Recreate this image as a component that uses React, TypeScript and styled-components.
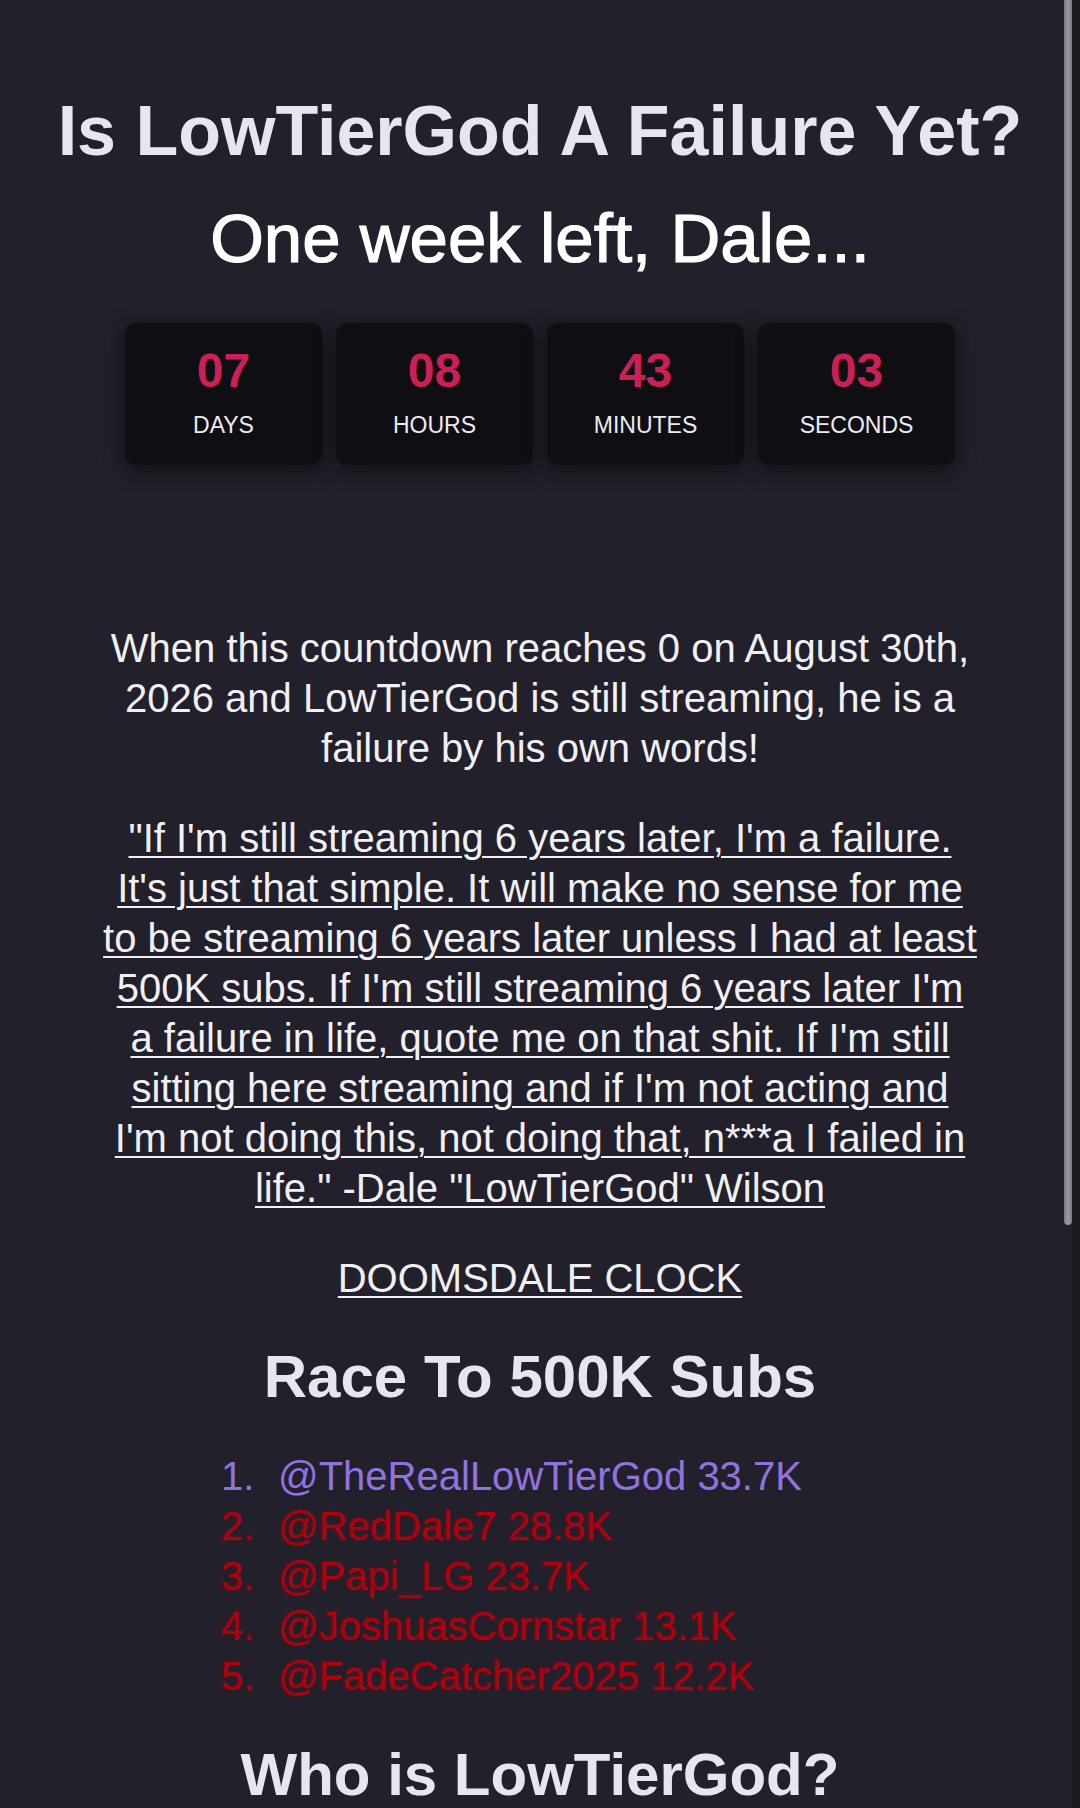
import React from 'react';
import styled, { createGlobalStyle } from 'styled-components';

const GlobalStyle = createGlobalStyle`
  html {
    scrollbar-width: none;
  }
  html::-webkit-scrollbar {
    display: none;
  }
  body {
    margin: 0;
    background: #22212b;
    font-family: "Liberation Sans", Arial, sans-serif;
  }
`;

const Page = styled.main`
  display: flex;
  flex-direction: column;
  align-items: center;
  text-align: center;
  padding-top: 89px;
  color: #f1f0f6;
`;

const Title = styled.h1`
  margin: 0;
  font-size: 70px;
  line-height: 84px;
  font-weight: 700;
  color: #e7e6ef;
`;

const Subtitle = styled.h2`
  margin: 25px 0 0;
  font-size: 69px;
  line-height: 82px;
  font-weight: 400;
  color: #ffffff;
  -webkit-text-stroke: 1.2px #ffffff;
`;

const Countdown = styled.div`
  display: flex;
  gap: 14px;
  margin-top: 43px;
`;

const TimeBox = styled.div`
  width: 197px;
  height: 142px;
  box-sizing: border-box;
  padding-top: 20px;
  background: #0f0e13;
  border-radius: 12px;
  box-shadow: 0 4px 18px 2px rgba(0, 0, 0, 0.5);
  display: flex;
  flex-direction: column;
  align-items: center;
`;

const TimeValue = styled.div`
  font-size: 48px;
  line-height: 56px;
  font-weight: 700;
  color: #cc1f55;
`;

const TimeLabel = styled.div`
  margin-top: 12px;
  font-size: 23px;
  line-height: 28px;
  color: #ecebf1;
`;

const Intro = styled.p`
  width: 900px;
  margin: 158px 0 0;
  font-size: 40px;
  line-height: 50px;
`;

const Quote = styled.a`
  display: block;
  margin-top: 40px;
  font-size: 40px;
  line-height: 50px;
  color: #f1f0f6;
  text-decoration: underline;
  text-decoration-thickness: 2px;
  text-underline-offset: 4px;
`;

const ClockLink = styled.a`
  display: block;
  margin-top: 40px;
  font-size: 40px;
  line-height: 50px;
  color: #f1f0f6;
  text-decoration: underline;
  text-decoration-thickness: 2px;
  text-underline-offset: 4px;
`;

const SectionTitle = styled.h2`
  margin: 38px 0 0;
  font-size: 60px;
  line-height: 72px;
  font-weight: 700;
  color: #e7e6ef;
`;

const Leaderboard = styled.ol`
  margin: 38px 0 0;
  padding: 0;
  list-style: none;
  text-align: left;
  counter-reset: rank;
`;

const Entry = styled.li<{ $leader?: boolean }>`
  counter-increment: rank;
  font-size: 40px;
  line-height: 50px;
  color: ${p => (p.$leader ? '#9372e0' : '#b0000e')};
  text-shadow: ${p => (p.$leader ? 'none' : '0 0 3px rgba(180, 0, 16, 0.5)')};

  &::before {
    content: counter(rank) ".";
    display: inline-block;
    width: 57px;
    margin-left: -57px;
  }
`;

const ScrollTrack = styled.div`
  position: fixed;
  top: 0;
  right: 0;
  width: 8px;
  height: 100vh;
  background: #1c1b22;
`;

const ScrollThumb = styled.div`
  position: fixed;
  top: 0;
  right: 8px;
  width: 8px;
  height: 1225px;
  border-radius: 0 0 4px 4px;
  background: linear-gradient(90deg, #77777c, #9b9ba0 50%, #77777c);
`;

const timeParts = [
  { value: '07', label: 'DAYS' },
  { value: '08', label: 'HOURS' },
  { value: '43', label: 'MINUTES' },
  { value: '03', label: 'SECONDS' },
];

const quoteLines = [
  '"If I\'m still streaming 6 years later, I\'m a failure.',
  'It\'s just that simple. It will make no sense for me',
  'to be streaming 6 years later unless I had at least',
  '500K subs. If I\'m still streaming 6 years later I\'m',
  'a failure in life, quote me on that shit. If I\'m still',
  'sitting here streaming and if I\'m not acting and',
  'I\'m not doing this, not doing that, n***a I failed in',
  'life." -Dale "LowTierGod" Wilson',
];

const racers = [
  '@TheRealLowTierGod 33.7K',
  '@RedDale7 28.8K',
  '@Papi_LG 23.7K',
  '@JoshuasCornstar 13.1K',
  '@FadeCatcher2025 12.2K',
];

const App: React.FC = () => (
  <>
    <GlobalStyle />
    <Page>
      <Title>Is LowTierGod A Failure Yet?</Title>
      <Subtitle>One week left, Dale...</Subtitle>

      <Countdown>
        {timeParts.map(part => (
          <TimeBox key={part.label}>
            <TimeValue>{part.value}</TimeValue>
            <TimeLabel>{part.label}</TimeLabel>
          </TimeBox>
        ))}
      </Countdown>

      <Intro>
        When this countdown reaches 0 on August 30th, 2026 and LowTierGod is still
        streaming, he is a failure by his own words!
      </Intro>

      <Quote href="#">
        {quoteLines.map((line, i) => (
          <React.Fragment key={i}>
            {line}
            {i < quoteLines.length - 1 && <br />}
          </React.Fragment>
        ))}
      </Quote>

      <ClockLink href="#">DOOMSDALE CLOCK</ClockLink>

      <SectionTitle>Race To 500K Subs</SectionTitle>
      <Leaderboard>
        {racers.map((name, i) => (
          <Entry key={name} $leader={i === 0}>
            {name}
          </Entry>
        ))}
      </Leaderboard>

      <SectionTitle>Who is LowTierGod?</SectionTitle>
    </Page>
    <ScrollTrack />
    <ScrollThumb />
  </>
);

export default App;
